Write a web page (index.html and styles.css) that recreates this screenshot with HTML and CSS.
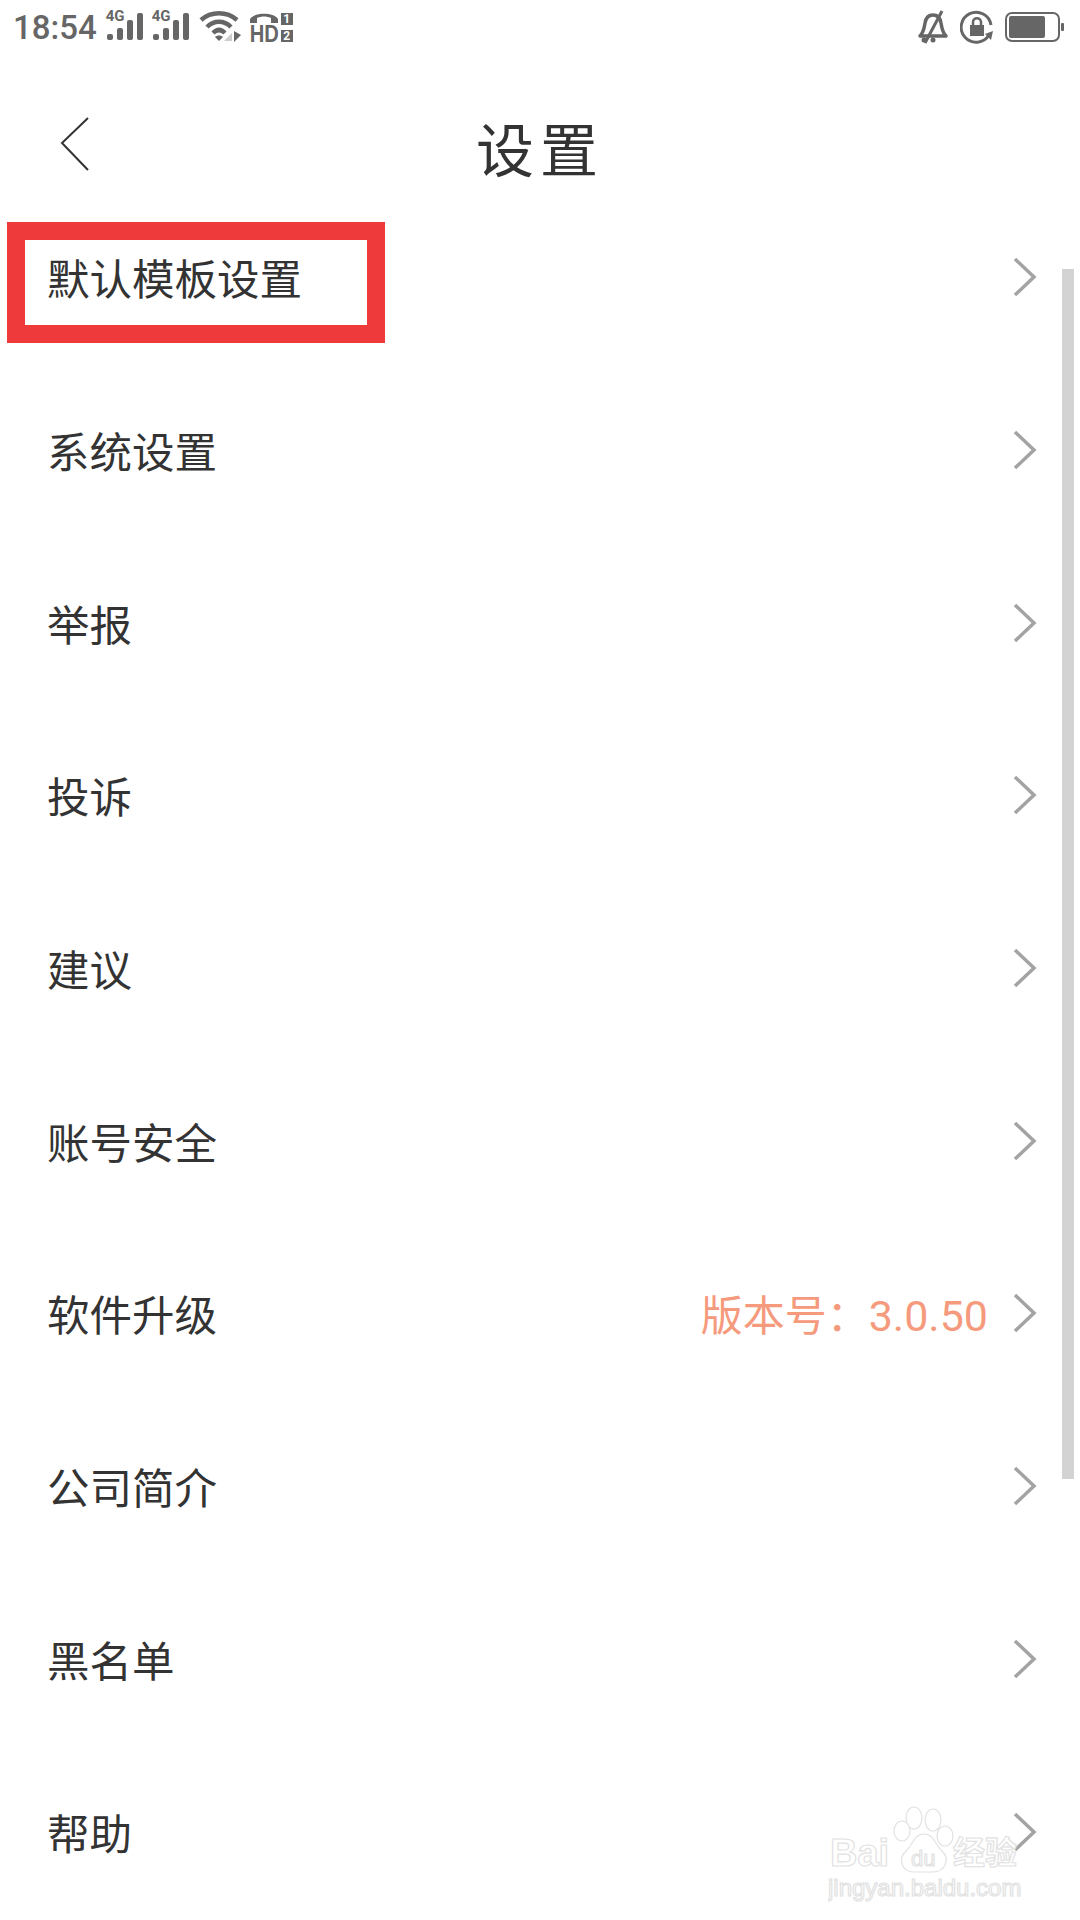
FILE: index.html
```html
<!DOCTYPE html>
<html lang="zh-CN">
<head>
    <meta charset="UTF-8">
    <meta name="viewport" content="width=device-width, initial-scale=1.0">
    <title>设置</title>
    <link rel="stylesheet" href="styles.css">
</head>
<body>
<div class="screen">

    <div class="status-bar">
        <div class="status-left">
            <span class="time">18:54</span>
            <span class="signal">
                <span class="signal-label">4G</span>
                <svg width="38" height="30" viewBox="0 0 38 30"><rect x="0" y="21" width="6" height="6" rx="2"/><rect x="10" y="15" width="6" height="12" rx="2"/><rect x="20" y="7" width="6" height="20" rx="2"/><rect x="30" y="0" width="6" height="27" rx="2"/></svg>
            </span>
            <span class="signal">
                <span class="signal-label">4G</span>
                <svg width="38" height="30" viewBox="0 0 38 30"><rect x="0" y="21" width="6" height="6" rx="2"/><rect x="10" y="15" width="6" height="12" rx="2"/><rect x="20" y="7" width="6" height="20" rx="2"/><rect x="30" y="0" width="6" height="27" rx="2"/></svg>
            </span>
            <svg class="wifi" width="44" height="32" viewBox="0 0 44 32">
                <path d="M2 9 C12 0 28 0 38 9" fill="none" stroke="#666" stroke-width="4.5"/>
                <path d="M8 16 C15 9 25 9 32 16" fill="none" stroke="#666" stroke-width="4.5"/>
                <path d="M14 22 C18 18 22 18 26 22" fill="none" stroke="#666" stroke-width="4.5"/>
                <path d="M20 30 L16 26 C18 24 22 24 24 26 Z" fill="#666"/>
                <path d="M25 30 L33 22 L33 30 Z" fill="#ccc"/>
                <path d="M35 20 L35 31 L42 24 Z" fill="#666"/>
            </svg>
            <span class="hd">
                <svg class="handset" width="30" height="12" viewBox="0 0 30 12"><path d="M1 11 L1 7 C5 0 25 0 29 7 L29 11 L22 11 L22 6 C17 4 13 4 8 6 L8 11 Z" fill="#666"/></svg>
                <span class="hd-label">HD</span>
            </span>
            <span class="sim-slots">
                <span class="sim">1</span>
                <span class="sim">2</span>
            </span>
        </div>
        <div class="status-right">
            <svg width="32" height="34" viewBox="0 0 32 34">
                <path d="M3 26 C7 22 7 18 8 13 C9 7 12 5 16 5 C20 5 23 7 24 13 C25 18 25 22 29 26 Z" fill="none" stroke="#666" stroke-width="3.5" stroke-linejoin="round"/>
                <path d="M8 33 L25 1" stroke="#666" stroke-width="3"/>
                <circle cx="7" cy="30" r="2.5" fill="#666"/>
                <circle cx="16" cy="30" r="2.5" fill="#666"/>
            </svg>
            <svg width="34" height="34" viewBox="0 0 34 34">
                <path d="M29 25 A15 15 0 1 1 31 15" fill="none" stroke="#666" stroke-width="3"/>
                <path d="M25 24 L33 21 L31 30 Z" fill="#666"/>
                <rect x="10" y="15" width="14" height="11" fill="#666"/>
                <path d="M13 15 L13 12 C13 7 21 7 21 12 L21 15" fill="none" stroke="#666" stroke-width="2.5"/>
            </svg>
            <svg width="60" height="30" viewBox="0 0 60 30">
                <rect x="1" y="1" width="53" height="28" rx="6" fill="none" stroke="#666" stroke-width="2"/>
                <rect x="4" y="4" width="36" height="22" rx="2" fill="#666"/>
                <rect x="56" y="11" width="3" height="8" rx="1" fill="#666"/>
            </svg>
        </div>
    </div>

    <header class="title-bar">
        <svg class="back" width="30" height="54" viewBox="0 0 30 54"><path d="M28 1 L2 26 L28 53" fill="none" stroke="#333" stroke-width="2"/></svg>
        <h1>设置</h1>
    </header>

    <ul class="menu">
        <li class="menu-row">
            <span class="menu-label">默认模板设置</span>
            <svg class="arrow" width="24" height="40" viewBox="0 0 24 40"><path d="M2 2 L21 20 L2 38"/></svg>
        </li>
        <li class="menu-row">
            <span class="menu-label">系统设置</span>
            <svg class="arrow" width="24" height="40" viewBox="0 0 24 40"><path d="M2 2 L21 20 L2 38"/></svg>
        </li>
        <li class="menu-row">
            <span class="menu-label">举报</span>
            <svg class="arrow" width="24" height="40" viewBox="0 0 24 40"><path d="M2 2 L21 20 L2 38"/></svg>
        </li>
        <li class="menu-row">
            <span class="menu-label">投诉</span>
            <svg class="arrow" width="24" height="40" viewBox="0 0 24 40"><path d="M2 2 L21 20 L2 38"/></svg>
        </li>
        <li class="menu-row">
            <span class="menu-label">建议</span>
            <svg class="arrow" width="24" height="40" viewBox="0 0 24 40"><path d="M2 2 L21 20 L2 38"/></svg>
        </li>
        <li class="menu-row">
            <span class="menu-label">账号安全</span>
            <svg class="arrow" width="24" height="40" viewBox="0 0 24 40"><path d="M2 2 L21 20 L2 38"/></svg>
        </li>
        <li class="menu-row">
            <span class="menu-label">软件升级</span>
            <span class="version"><span class="version-name">版本号：</span>3.0.50</span>
            <svg class="arrow" width="24" height="40" viewBox="0 0 24 40"><path d="M2 2 L21 20 L2 38"/></svg>
        </li>
        <li class="menu-row">
            <span class="menu-label">公司简介</span>
            <svg class="arrow" width="24" height="40" viewBox="0 0 24 40"><path d="M2 2 L21 20 L2 38"/></svg>
        </li>
        <li class="menu-row">
            <span class="menu-label">黑名单</span>
            <svg class="arrow" width="24" height="40" viewBox="0 0 24 40"><path d="M2 2 L21 20 L2 38"/></svg>
        </li>
        <li class="menu-row">
            <span class="menu-label">帮助</span>
            <svg class="arrow" width="24" height="40" viewBox="0 0 24 40"><path d="M2 2 L21 20 L2 38"/></svg>
        </li>
    </ul>

    <!-- things lying over the list -->
    <div class="highlight-box"></div>
    <div class="scrollbar"></div>
    <svg class="watermark" width="204" height="104" viewBox="0 0 204 104">
        <ellipse cx="86" cy="14" rx="8" ry="11"/>
        <ellipse cx="105" cy="16" rx="8" ry="11"/>
        <ellipse cx="74" cy="27" rx="8" ry="10"/>
        <ellipse cx="117" cy="32" rx="8" ry="10"/>
        <path d="M96 30 C106 30 108 42 114 47 C122 54 118 68 105 68 L86 68 C73 68 70 54 78 47 C84 42 86 30 96 30 Z"/>
        <text class="wm-big" x="2" y="62">Bai</text>
        <text class="wm-du" x="83" y="62">du</text>
        <text class="wm-cn" x="125" y="60">经验</text>
        <text class="wm-url" x="0" y="92">jingyan.baidu.com</text>
    </svg>

</div>
</body>
</html>
```

FILE: styles.css
```css
* {
    box-sizing: border-box;
}
body {
    margin: 0;
    padding: 0;
    background-color: #fff;
    font-family: 'Noto Sans CJK SC', 'Noto Sans', sans-serif;
    color: #333;
}
.screen {
    position: relative;
    width: 1080px;
    height: 1920px;
    overflow: hidden;
    background-color: #fff;
}

/* status bar */
.status-bar {
    display: flex;
    justify-content: space-between;
    align-items: center;
    height: 54px;
    padding: 0 15px 0 13px;
}
.status-left {
    display: flex;
    align-items: center;
    height: 54px;
}
.status-right {
    display: flex;
    align-items: center;
    gap: 11px;
}
.time {
    font-family: Roboto, sans-serif;
    font-weight: 500;
    font-size: 33px;
    color: #666;
    margin-right: 10px;
}
.signal {
    position: relative;
    display: block;
    width: 38px;
    height: 30px;
    margin-right: 8px;
    margin-top: 2px;
}
.signal svg {
    display: block;
    fill: #666;
}
.signal-label {
    position: absolute;
    top: -5px;
    left: -1px;
    font-family: Roboto, sans-serif;
    font-weight: 700;
    font-size: 15px;
    line-height: 16px;
    color: #666;
}
.wifi {
    margin: 0 6px 0 0;
}
.hd {
    display: flex;
    flex-direction: column;
    align-items: center;
    width: 31px;
    margin-right: 1px;
}
.handset {
    display: block;
}
.hd-label {
    font-family: 'Liberation Sans', sans-serif;
    font-weight: 700;
    font-size: 24px;
    line-height: 19px;
    color: #666;
    transform: scaleX(0.84);
}
.sim-slots {
    display: flex;
    flex-direction: column;
    gap: 5px;
}
.sim {
    width: 12px;
    height: 12px;
    background-color: #666;
    color: #fff;
    font-family: Roboto, sans-serif;
    font-weight: 700;
    font-size: 12px;
    line-height: 12px;
    text-align: center;
}

/* title */
.title-bar {
    position: relative;
    display: flex;
    justify-content: center;
    align-items: center;
    height: 137px;
}
.back {
    position: absolute;
    left: 60px;
    top: 63px;
}
.title-bar h1 {
    margin: 0;
    font-size: 58px;
    font-weight: 400;
    letter-spacing: 6px;
    color: #333;
    line-height: 1;
    padding-top: 48px;
}

/* list */
.menu {
    list-style: none;
    margin: 0;
    padding: 0;
}
.menu-row {
    display: flex;
    align-items: center;
    height: 172.7px;
    padding: 0 43px 0 47px;
}
.menu-label {
    flex: 1;
    font-size: 42.5px;
    line-height: 60px;
}
.version {
    font-family: Roboto, 'Noto Sans CJK SC', sans-serif;
    font-size: 43px;
    line-height: 60px;
    color: #f59a7c;
    margin-right: 25px;
    padding-top: 6px;
}
.version-name {
    font-size: 42px;
}
.arrow {
    display: block;
    fill: none;
    stroke: #a3a3a3;
    stroke-width: 3.5;
}

/* overlays */
.highlight-box {
    position: absolute;
    left: 7px;
    top: 222px;
    width: 378px;
    height: 121px;
    border: 18px solid #ee3a3b;
}
.scrollbar {
    position: absolute;
    left: 1062px;
    top: 269px;
    width: 12px;
    height: 1210px;
    background-color: #d3d3d3;
}
.watermark {
    position: absolute;
    left: 828px;
    top: 1804px;
    fill: #fff;
    stroke: #e2e2e2;
    stroke-width: 1.2;
}
.watermark text {
    font-family: 'Liberation Sans', 'Noto Sans CJK SC', sans-serif;
}
.wm-big {
    font-size: 38px;
    font-weight: 700;
}
.wm-du {
    font-size: 22px;
}
.wm-cn {
    font-size: 32px;
    font-weight: 700;
}
.wm-url {
    font-size: 24px;
}
```
